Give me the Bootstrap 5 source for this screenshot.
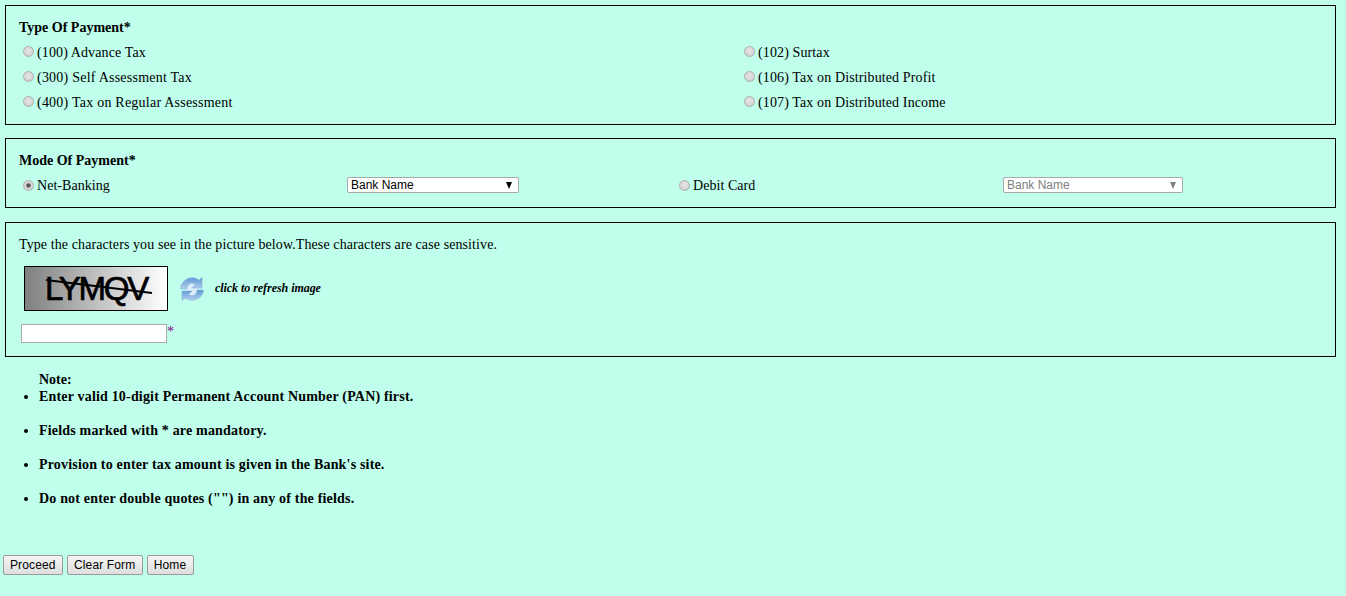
<!DOCTYPE html>
<html lang="en">
<head>
<meta charset="utf-8">
<title>Payment</title>
<link href="https://cdn.jsdelivr.net/npm/bootstrap@5.3.0/dist/css/bootstrap.min.css" rel="stylesheet">
<style>
html,body{height:100%}
body{background:#bfffec;color:#000;font-family:"Liberation Serif","Times New Roman",serif;font-size:14px;line-height:16px;overflow:hidden}
.pagewrap{padding:5px 10px 0 5px}
.boxed{border:1px solid #000;padding:14px 13px 0 13px}
.box-type{height:120px;margin-bottom:13px}
.box-mode{height:70px;margin-bottom:14px}
.box-captcha{height:135px}
.heading{font-weight:700;height:16px;margin-bottom:9px;font-size:14px}
.box-mode .heading{margin-bottom:6px}
.optrow{height:25px;align-items:flex-start}
.optcol{flex:1 1 0;display:flex;align-items:flex-start;letter-spacing:.12px}
.optcol:first-child{flex:0 0 721px}
.wide-text{letter-spacing:.23px}
.radio{appearance:none;-webkit-appearance:none;width:11px;height:11px;border-radius:50%;border:1px solid #aeaeae;background:radial-gradient(circle at 50% 40%,#e6e6e6 0,#d6d6d6 60%,#bdbdbd 100%);margin:1px 3px 0 4px;flex:none;display:block}
.radio:checked{background:radial-gradient(circle,#555 0,#555 28%,#d8d8d8 40%,#cfcfcf 100%)}
.moderow{height:20px;align-items:center}
.modecell{display:flex;align-items:center;letter-spacing:.05px}
.modecell>span{padding-top:2px}
.cell-a{width:328px}.cell-b{width:328px}.cell-c{width:328px}
.selbox{width:172px;height:16px;border:1px solid #a9a9a9;border-radius:2px;background:#fff;font-family:"Liberation Sans",Arial,sans-serif;font-size:12px;line-height:14px;padding:0 0 0 3px;color:#000;display:flex;align-items:center;justify-content:space-between;letter-spacing:0}
.selbox>span{padding-top:0}
.selbox.off{width:180px;color:#808080}
.selarrow{width:0;height:0;border-left:3.5px solid transparent;border-right:3.5px solid transparent;border-top:7px solid #000;margin-right:6px}
.selbox.off .selarrow{border-top-color:#808080}
.capnote{letter-spacing:.095px}
.captcharow{margin:13px 0 13px 5px;height:45px}
.captchaimg{width:144px;height:45px;border:1px solid #000;background:linear-gradient(90deg,#808080,#fff);position:relative;flex:none;display:flex;align-items:center;padding-left:20px;font-family:"Liberation Sans",Arial,sans-serif;font-size:33px;line-height:43px;letter-spacing:-2.2px;color:#000;-webkit-text-stroke:.7px #000}
.captchaline{position:absolute;left:0;top:0;width:142px;height:43px}
.refresh{width:26px;height:26px;margin-left:11px;flex:none}
.refreshtext{margin-left:10px;font-size:12px;font-style:italic;font-weight:700;letter-spacing:-.05px;margin-bottom:2px}
.capinput{width:146px;height:19px;border:1px solid #a9a9a9;background:#fff;padding:0;margin-left:2px;display:block}
.star{color:#800080;font-size:14px;margin-bottom:3px}
.notes{margin:15px 0 0 34px;font-weight:700;height:183px;letter-spacing:.18px}
.notes ul{margin:0;padding:0;list-style:disc}
.notes li{margin-bottom:18px;height:16px}
.notehead{height:17px;letter-spacing:0}
.actions{margin-left:-2px;gap:4px}
.oldbtn{font-family:"Liberation Sans",Arial,sans-serif;font-size:12px;line-height:14px;height:20px;padding:0 6.5px 0 6px;color:#000;background:linear-gradient(#f6f6f6,#dedede);border:1px solid #9a9a9a;border-radius:2px;letter-spacing:.12px}
</style>
</head>
<body>
<div class="pagewrap">
  <form>
    <div class="boxed box-type">
      <div class="heading">Type Of Payment*</div>
      <div class="d-flex optrow"><div class="optcol"><input class="radio" type="radio" name="t"><span>(100) Advance Tax</span></div><div class="optcol"><input class="radio" type="radio" name="t"><span>(102) Surtax</span></div></div>
      <div class="d-flex optrow"><div class="optcol"><input class="radio" type="radio" name="t"><span class="wide-text">(300) Self Assessment Tax</span></div><div class="optcol"><input class="radio" type="radio" name="t"><span>(106) Tax on Distributed Profit</span></div></div>
      <div class="d-flex optrow"><div class="optcol"><input class="radio" type="radio" name="t"><span class="wide-text">(400) Tax on Regular Assessment</span></div><div class="optcol"><input class="radio" type="radio" name="t"><span>(107) Tax on Distributed Income</span></div></div>
    </div>
    <div class="boxed box-mode">
      <div class="heading">Mode Of Payment*</div>
      <div class="d-flex moderow">
        <div class="modecell cell-a"><input class="radio" type="radio" name="m" checked><span>Net-Banking</span></div>
        <div class="modecell cell-b"><div class="selbox"><span>Bank Name</span><i class="selarrow"></i></div></div>
        <div class="modecell cell-c"><input class="radio" type="radio" name="m"><span>Debit Card</span></div>
        <div class="modecell"><div class="selbox off"><span>Bank Name</span><i class="selarrow"></i></div></div>
      </div>
    </div>
    <div class="boxed box-captcha">
      <div class="capnote">Type the characters you see in the picture below.These characters are case sensitive.</div>
      <div class="d-flex align-items-center captcharow">
        <div class="captchaimg">LYMQV
          <svg class="captchaline" viewBox="0 0 142 43"><path d="M21 13L127 26" stroke="#000" stroke-width="2.2" fill="none"/></svg>
        </div>
        <svg class="refresh" viewBox="0 0 26 26">
          <defs><linearGradient id="rg" x1="0" y1="0" x2="0" y2="1"><stop offset="0" stop-color="#5c98d4"/><stop offset=".55" stop-color="#8fb8e3"/><stop offset="1" stop-color="#b4d0ec"/></linearGradient></defs>
          <circle cx="13" cy="13" r="7" fill="#d9eef8"/>
          <path d="M1.500 13C2 5.500 9 .5 15.500 2c1.800.4 3 1.200 4.200 2.200L23 1.500V12H13l3.500-3.500c-2-1.500-5-1.700-7 .3-1 1-1.500 2.600-1.500 4.200z" fill="url(#rg)" stroke="#7fa9d8" stroke-width=".5"/>
          <path d="M24.500 14c-.5 7.500-7.500 11-14 10-1.800-.3-3-1-4.200-2L3 24.500V15h10l-3.500 3.500c2 1.500 5 1.700 7-.3 1-1 1.500-2.600 1.500-4.200z" fill="url(#rg)" stroke="#7fa9d8" stroke-width=".5"/>
        </svg>
        <span class="refreshtext">click to refresh image</span>
      </div>
      <div class="d-flex align-items-center"><input class="capinput" type="text"><span class="star">*</span></div>
    </div>
    <div class="notes">
      <div class="notehead">Note:</div>
      <ul>
        <li>Enter valid 10-digit Permanent Account Number (PAN) first.</li>
        <li>Fields marked with * are mandatory.</li>
        <li>Provision to enter tax amount is given in the Bank's site.</li>
        <li>Do not enter double quotes ("") in any of the fields.</li>
      </ul>
    </div>
    <div class="d-flex actions">
      <button type="button" class="oldbtn">Proceed</button>
      <button type="button" class="oldbtn">Clear Form</button>
      <button type="button" class="oldbtn">Home</button>
    </div>
  </form>
</div>
<script src="https://cdn.jsdelivr.net/npm/bootstrap@5.3.0/dist/js/bootstrap.bundle.min.js"></script>
</body>
</html>
